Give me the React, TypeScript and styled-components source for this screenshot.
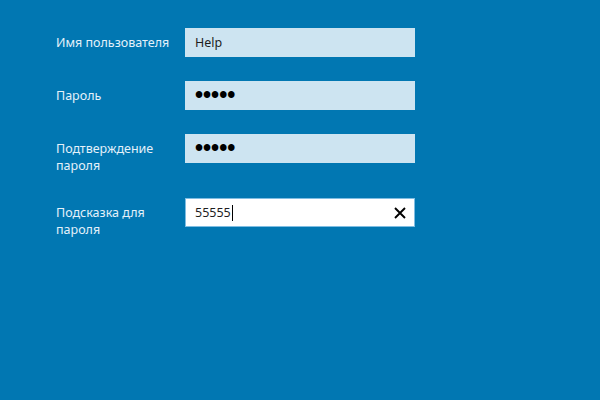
import React from "react";
import styled, { createGlobalStyle } from "styled-components";

const Global = createGlobalStyle`
  html, body { margin: 0; padding: 0; }
  body {
    background: #0177b2;
    width: 600px;
    height: 400px;
    overflow: hidden;
    font-family: "Noto Sans", "Segoe UI", Arial, sans-serif;
  }
`;

const Page = styled.div`
  width: 600px;
  height: 400px;
  background: #0177b2;
  box-sizing: border-box;
  padding: 28px 0 0 56px;
  display: flex;
  flex-direction: column;
  gap: 24px;
`;

const Row = styled.div`
  display: flex;
  align-items: flex-start;
`;

const Label = styled.div`
  width: 129px;
  padding-top: 6px;
  color: #e4f1fa;
  font-size: 12.5px;
  line-height: 17px;
`;

const Field = styled.div<{ $active?: boolean }>`
  width: 230px;
  height: 29px;
  box-sizing: border-box;
  display: flex;
  align-items: center;
  padding: 0 7px 0 9px;
  background: ${(p) => (p.$active ? "#ffffff" : "#cde4f1")};
  border: 1px solid ${(p) => (p.$active ? "#7fbde2" : "#cde4f1")};
  color: #1e1e1e;
  font-size: 12.5px;
`;

const Value = styled.span`
  flex: 1;
  display: flex;
  align-items: center;
`;

const Dots = styled.span`
  font-family: "Liberation Sans", Arial, sans-serif;
  font-size: 23px;
  line-height: 1;
  color: #000;
  font-weight: bold;
  margin-top: -1px;
`;

const Caret = styled.span`
  display: inline-block;
  width: 1px;
  height: 16px;
  background: #000;
  margin-left: 1px;
`;

const Clear = styled.button`
  border: none;
  background: transparent;
  padding: 0;
  width: 14px;
  height: 14px;
  display: flex;
  align-items: center;
  justify-content: center;
  cursor: pointer;
`;

export default function App() {
  return (
    <>
      <Global />
      <Page>
        <Row>
          <Label>Имя пользователя</Label>
          <Field>
            <Value>Help</Value>
          </Field>
        </Row>
        <Row>
          <Label>Пароль</Label>
          <Field>
            <Value>
              <Dots>•••••</Dots>
            </Value>
          </Field>
        </Row>
        <Row>
          <Label>
            Подтверждение
            <br />
            пароля
          </Label>
          <Field>
            <Value>
              <Dots>•••••</Dots>
            </Value>
          </Field>
        </Row>
        <Row>
          <Label>
            Подсказка для
            <br />
            пароля
          </Label>
          <Field $active>
            <Value>
              55555
              <Caret />
            </Value>
            <Clear aria-label="Очистить">
              <svg width="12" height="12" viewBox="0 0 12 12">
                <path d="M1 1 L11 11 M11 1 L1 11" stroke="#000" strokeWidth="1.9" />
              </svg>
            </Clear>
          </Field>
        </Row>
      </Page>
    </>
  );
}
